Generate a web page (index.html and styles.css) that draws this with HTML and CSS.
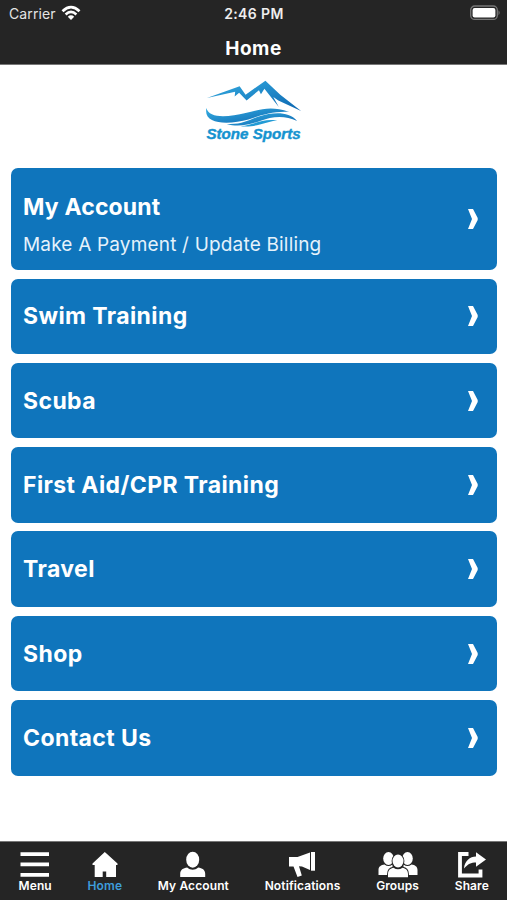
FILE: index.html
```
<!DOCTYPE html>
<html lang="en">
<head>
  <meta charset="utf-8">
  <title>Stone Sports</title>
  <link rel="stylesheet" href="styles.css">
</head>
<body>
  <div class="app">
    <header class="header">
      <div class="status-bar">
        <div class="carrier">
          <span>Carrier</span>
          <svg class="wifi" width="20" height="16" viewBox="0 0 20 16">
            <path d="M1.500 6.200Q10-1.800 18.500 6.200" fill="none" stroke="#fff" stroke-width="2.700"/>
            <path d="M4.600 9.500Q10 4.300 15.400 9.500" fill="none" stroke="#fff" stroke-width="2.500"/>
            <path d="M6.800 11.700Q10 8.800 13.200 11.700L10 15z" fill="#fff"/>
          </svg>
        </div>
        <span class="time">2:46 PM</span>
        <svg class="battery" width="31" height="16" viewBox="0 0 31 16">
          <rect x=".7" y="1" width="26.6" height="13.4" rx="4" fill="#252525" stroke="#777" stroke-width="1.3"/>
          <rect x="2.6" y="3" width="22.8" height="9.4" rx="2" fill="#fff"/>
          <path d="M28.5 5.2q2.4 2.4 0 5z" fill="#777"/>
        </svg>
      </div>
      <h1 class="title">Home</h1>
    </header>

    <main class="content">
      <svg class="logo" width="120" height="80" viewBox="0 0 120 80">
        <defs>
          <linearGradient id="blue" x1="0" y1="0" x2="1" y2="1">
            <stop offset="0" stop-color="#35aee2"/>
            <stop offset="1" stop-color="#0c65b0"/>
          </linearGradient>
        </defs>
        <path d="M12 28L45 16l6 8.500L71 10.500 86 24.500l21 16.500L84 30.500l-5-3.500 5.500 10L70 18.500 66.500 24l-2-4L52 30.500l-7.500-8-4.500 4 .5-5z" fill="url(#blue)"/>
        <path d="M11.500 38C14 49 34 47 51 43S77 36 95 42C79 41 66 45.500 54 49.500 34 55 8 55 11.500 38z" fill="url(#blue)"/>
        <path d="M32 54C48 55 56 49 66 46S94 40 103 51C90 44.500 76 47 67 50.500S44 58 32 54z" fill="url(#blue)"/>
        <path d="M46 56.500C60 55 67 48.500 83 50.500 70 51.500 63 58 46 56.500z" fill="#229bd5"/>
        <text class="logo-text" x="11.500" y="69" textLength="95" lengthAdjust="spacingAndGlyphs">Stone Sports</text>
      </svg>

      <nav class="menu">
        <a class="card card-large">
          <div>
            <h2 class="card-title">My Account</h2>
            <p class="card-text">Make A Payment / Update Billing</p>
          </div>
          <svg class="arrow" width="10" height="20" viewBox="0 0 10 20"><path d="M0 0h5L9.700 9v2L5 20H0l4-10z"/></svg>
        </a>
        <a class="card">
          <h2 class="card-title">Swim Training</h2>
          <svg class="arrow" width="10" height="20" viewBox="0 0 10 20"><path d="M0 0h5L9.700 9v2L5 20H0l4-10z"/></svg>
        </a>
        <a class="card">
          <h2 class="card-title">Scuba</h2>
          <svg class="arrow" width="10" height="20" viewBox="0 0 10 20"><path d="M0 0h5L9.700 9v2L5 20H0l4-10z"/></svg>
        </a>
        <a class="card">
          <h2 class="card-title">First Aid/CPR Training</h2>
          <svg class="arrow" width="10" height="20" viewBox="0 0 10 20"><path d="M0 0h5L9.700 9v2L5 20H0l4-10z"/></svg>
        </a>
        <a class="card">
          <h2 class="card-title">Travel</h2>
          <svg class="arrow" width="10" height="20" viewBox="0 0 10 20"><path d="M0 0h5L9.700 9v2L5 20H0l4-10z"/></svg>
        </a>
        <a class="card">
          <h2 class="card-title">Shop</h2>
          <svg class="arrow" width="10" height="20" viewBox="0 0 10 20"><path d="M0 0h5L9.700 9v2L5 20H0l4-10z"/></svg>
        </a>
        <a class="card">
          <h2 class="card-title">Contact Us</h2>
          <svg class="arrow" width="10" height="20" viewBox="0 0 10 20"><path d="M0 0h5L9.700 9v2L5 20H0l4-10z"/></svg>
        </a>
      </nav>
    </main>

    <footer class="tab-bar">
      <a class="tab">
        <svg width="30" height="27" viewBox="0 0 30 27"><path d="M.5 1.200h28.500v3.800H.5zM.5 11.500h28.500v3.800H.5zM.5 22h28.500v3.800H.5z"/></svg>
        <span>Menu</span>
      </a>
      <a class="tab active">
        <svg width="26" height="27" viewBox="0 0 26 27"><path d="M12.800 1L.5 12.500v1.500h2.200v12h8v-5.500h3.500V26h9.800V14h1.500v-1.500z"/></svg>
        <span>Home</span>
      </a>
      <a class="tab">
        <svg width="26" height="27" viewBox="0 0 26 27"><ellipse cx="12.700" cy="8.700" rx="6.500" ry="8"/><path d="M.2 26V22.800c0-4 3-5.800 7-6.300 3.500 3 7.500 3 11 0 4 .5 7 2.300 7 6.300V26z"/></svg>
        <span>My Account</span>
      </a>
      <a class="tab">
        <svg width="28" height="27" viewBox="0 0 28 27"><path d="M0 6h8.500L21 1.500v17.500L13 15.500l-3-.2 2.800 9.200-4.300 1.500L4.500 15.500H0z"/><path d="M22 1h4v18.700h-4z"/></svg>
        <span>Notifications</span>
      </a>
      <a class="tab">
        <svg width="40" height="27" viewBox="0 0 40 27">
          <ellipse cx="10.500" cy="7.500" rx="5.300" ry="6.500"/><ellipse cx="29.500" cy="7.500" rx="5.300" ry="6.500"/>
          <path d="M.5 24v-5c0-3.500 2.500-5 6-5.500q4 3 8 0v6l-5 4.500zM39.500 24v-5c0-3.500-2.500-5-6-5.500q-4 3-8 0v6l5 4.500z"/>
          <ellipse class="front" cx="20" cy="10" rx="5.500" ry="6.500"/>
          <path class="front" d="M10 26.200V23c0-4 2.500-5.800 5.500-6.300q4.500 3.300 9 0c3 .5 5.500 2.300 5.500 6.300v3.200z"/>
        </svg>
        <span>Groups</span>
      </a>
      <a class="tab">
        <svg width="30" height="27" viewBox="0 0 30 27"><path d="M11.500 3H3v21.500h20.500V18.500" fill="none" stroke="#fff" stroke-width="3.800"/><path d="M19 1.300L29 8.500l-10 7.200v-4.200C14 11.500 11 13 7 17.500 7.500 10 13 5.500 19 5.500z"/></svg>
        <span>Share</span>
      </a>
    </footer>
  </div>
</body>
</html>
```

FILE: styles.css
```
* {
  box-sizing: border-box;
}
body {
  font-family: Inter, "Liberation Sans", sans-serif;
  margin: 0;
  background: #fff;
}
h1, h2, p {
  margin: 0;
}
.app {
  display: flex;
  flex-direction: column;
  height: 900px;
}
.header {
  height: 65px;
  background: #252525;
  border-bottom: 1px solid #777;
  color: #fff;
}
.status-bar {
  display: grid;
  grid-template-columns: 1fr auto 1fr;
  align-items: center;
  height: 27px;
  padding: 0 6px 0 9px;
}
.carrier {
  display: flex;
  align-items: center;
  gap: 5px;
  font-size: 14px;
  letter-spacing: 0.1px;
  color: #e4e4e4;
}
.wifi {
  margin-top: -2px;
}
.time {
  font-size: 14px;
  font-weight: 600;
  letter-spacing: 0.4px;
  margin-right: 2px;
  color: #eee;
}
.battery {
  justify-self: end;
  margin-top: -1px;
}
.title {
  font-size: 19px;
  line-height: 24px;
  font-weight: 700;
  letter-spacing: 0.5px;
  text-align: center;
  padding-top: 10px;
}
.content {
  flex: 1;
  padding: 5px 10.5px 0 11px;
}
.logo {
  display: block;
  margin: 0 auto 18.3px;
  padding-left: 1px;
}
.logo-text {
  font-family: "Liberation Sans", Arial, sans-serif;
  font-size: 14.5px;
  font-weight: bold;
  font-style: italic;
  fill: #1593d0;
  stroke: #1593d0;
  stroke-width: 0.4px;
}
.menu {
  display: flex;
  flex-direction: column;
  gap: 8.8px;
}
.card {
  display: flex;
  align-items: center;
  justify-content: space-between;
  height: 75.5px;
  padding: 0 19px 0 12px;
  border-radius: 7px;
  background: #0f75bc;
  color: #fff;
}
.card-large {
  height: 101.5px;
}
.card-large div {
  padding-top: 10px;
}
.card-title {
  font-size: 23px;
  line-height: 30px;
  font-weight: 700;
  letter-spacing: 0.4px;
}
.card-large .card-title {
  letter-spacing: 0.15px;
}
.card-text {
  font-size: 19px;
  line-height: 24px;
  letter-spacing: 0.18px;
  margin-top: 11px;
  color: #e5f2fb;
}
.arrow {
  fill: #fff;
}
.tab-bar {
  display: flex;
  justify-content: space-between;
  height: 59px;
  padding: 9px 18px 0 18.5px;
  background: #252525;
  border-top: 1px solid #777;
}
.tab {
  display: flex;
  flex-direction: column;
  align-items: center;
  color: #fff;
  fill: #fff;
  font-size: 12px;
  line-height: 15px;
  font-weight: 600;
  letter-spacing: 0.12px;
}
.active {
  color: #3e9ddb;
}
.front {
  stroke: #252525;
  stroke-width: 1.8px;
  paint-order: stroke;
}
```
